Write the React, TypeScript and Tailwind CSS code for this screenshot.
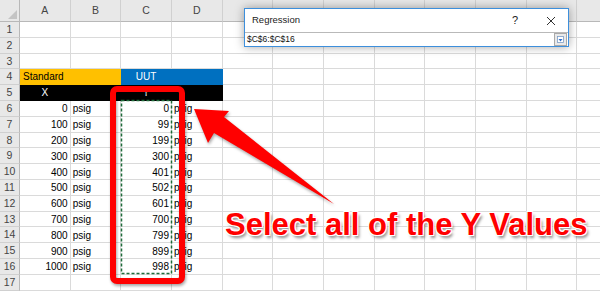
const COLS = ["A", "B", "C", "D", "E", "F", "G", "H", "I", "J", "K", "L"];
const XS = [0, 100, 200, 300, 400, 500, 600, 700, 800, 900, 1000];
const YS = [0, 99, 199, 300, 401, 502, 601, 700, 799, 899, 998];
const ROWS = Array.from({ length: 18 }, (_, i) => i + 1);

const base =
  "flex items-center overflow-hidden whitespace-nowrap leading-none text-[10px] border-r border-b";

function cellProps(r: number, c: number): { cls: string; text?: string } {
  if (r === 4) {
    if (c === 0) return { cls: "bg-[#ffc000] border-[#ffc000] text-black pl-[3px]", text: "Standard" };
    if (c === 1) return { cls: "bg-[#ffc000] border-[#ffc000]" };
    if (c === 2) return { cls: "bg-[#0070c0] border-[#0070c0] text-white justify-center", text: "UUT" };
    if (c === 3) return { cls: "bg-[#0070c0] border-[#0070c0]" };
  }
  if (r === 5) {
    if (c === 0) return { cls: "bg-black border-black text-white justify-center", text: "X" };
    if (c === 2) return { cls: "bg-black border-black text-white justify-center", text: "Y" };
    if (c === 1 || c === 3) return { cls: "bg-black border-black" };
  }
  if (r >= 6 && r <= 16) {
    const i = r - 6;
    if (c === 0) return { cls: "bg-white border-[#dadada] text-black justify-end pr-[2px] pt-[2px]", text: String(XS[i]) };
    if (c === 2) return { cls: "bg-white border-[#dadada] text-black justify-end pr-[2px] pt-[2px]", text: String(YS[i]) };
    if (c === 1 || c === 3) return { cls: "bg-white border-[#dadada] text-black pl-[2px] pt-[2px]", text: "psig" };
  }
  return { cls: "bg-white border-[#dadada]" };
}

function Dialog() {
  return (
    <div className="absolute left-[244px] top-[8px] w-[325px] h-[39px] bg-white border border-[#3d8fdc] shadow-[0_0_9px_rgba(0,0,0,0.35)] flex flex-col font-['Liberation_Sans',sans-serif] text-[#222]">
      <div className="h-[24px] flex items-center pl-[7px] pr-[12px] text-[9.5px]">
        <span className="flex-1">Regression</span>
        <span className="mr-[28px] text-[11px]">?</span>
        <svg width="10" height="10" viewBox="0 0 10 10">
          <path d="M1 1 L9 9 M9 1 L1 9" stroke="#333" strokeWidth="1" />
        </svg>
      </div>
      <div className="flex-1 flex items-center border-t border-[#b9b9b9] pl-[2px]">
        <span className="flex-1 text-[8.5px] text-[#111]">$C$6:$C$16</span>
        <div className="w-[13px] h-[13px] mr-[1px] bg-[#e9e9e9] border border-[#a9a9a9] flex items-center justify-center">
          <svg width="7" height="7" viewBox="0 0 7 7">
            <rect x="0.5" y="0.5" width="6" height="6" fill="#fff" stroke="#7a9cc6" strokeWidth="0.8" />
            <path d="M1.5 3 L5.5 3 L3.5 5.5 Z" fill="#2d6fd0" />
          </svg>
        </div>
      </div>
    </div>
  );
}

export default function App() {
  return (
    <div className="relative w-[600px] h-[291px] overflow-hidden bg-white font-['Liberation_Sans',Arial,sans-serif]">
      <div className="grid grid-cols-[20px_repeat(12,50.67px)] grid-rows-[22px_repeat(18,15.8px)]">
        <div className="relative bg-[#e8e8e8] border-r border-b border-[#b8b8b8]">
          <svg className="absolute right-[2px] bottom-[2px]" width="9" height="9" viewBox="0 0 9 9">
            <path d="M9 0 L9 9 L0 9 Z" fill="#c4c4c4" />
          </svg>
        </div>
        {COLS.map((c) => (
          <div
            key={c}
            className="flex items-center justify-center bg-[#e8e8e8] border-r border-b border-r-[#d0d0d0] border-b-[#b8b8b8] text-[10.5px] text-[#444]"
          >
            {c === "A" || c === "B" || c === "C" || c === "D" ? c : ""}
          </div>
        ))}
        {ROWS.map((r) => (
          <div key={r} className="contents">
            <div className="flex items-center justify-center bg-[#e8e8e8] border-r border-b border-r-[#b8b8b8] border-b-[#d0d0d0] text-[10.5px] text-[#444] pt-[1px]">
              {r < 18 ? r : ""}
            </div>
            {COLS.map((_, c) => {
              const p = cellProps(r, c);
              return (
                <div key={c} className={`${base} ${p.cls}`}>
                  {p.text}
                </div>
              );
            })}
          </div>
        ))}
      </div>

      <svg className="absolute inset-0 pointer-events-none" width="600" height="291" viewBox="0 0 600 291">
        <rect x="121.5" y="100.5" width="50" height="173" fill="none" stroke="#1f6b3a" strokeWidth="1.5" strokeDasharray="3 2" />
        <g style={{ filter: "drop-shadow(1px 2px 1.5px rgba(0,0,0,0.35))" }}>
          <rect x="113" y="89" width="69" height="192" rx="4" fill="none" stroke="#ff0000" strokeWidth="6" />
          <polygon
            points="194,109 229,111 224,117 334,204 214,133 208,143"
            fill="#ff0000"
          />
        </g>
      </svg>

      <div className="absolute left-[225px] top-[209px] text-[31px] leading-[31px] font-bold text-[#ff0000] whitespace-nowrap [text-shadow:1px_1px_0_#fff,-1px_-1px_0_#fff,1px_-1px_0_#fff,-1px_1px_0_#fff,2px_3px_3px_rgba(0,0,0,0.45)]">
        Select all of the Y Values
      </div>

      <Dialog />
    </div>
  );
}
